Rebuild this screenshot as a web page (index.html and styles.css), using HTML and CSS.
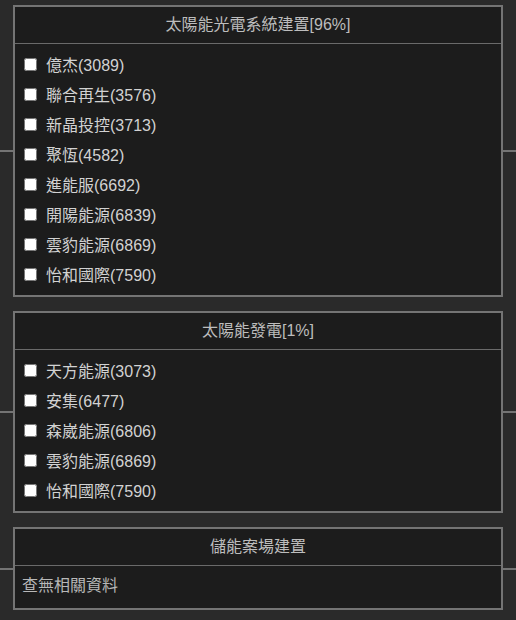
FILE: index.html
```html
<!DOCTYPE html>
<html lang="zh-Hant">
<head>
<meta charset="utf-8">
<title>產業鏈</title>
<link rel="stylesheet" href="styles.css">
</head>
<body>
<div class="chain">
  <section class="box">
    <div class="box-head">太陽能光電系統建置[96%]</div>
    <ul class="box-list">
      <li><label class="item"><input type="checkbox" class="check">億杰(3089)</label></li>
      <li><label class="item"><input type="checkbox" class="check">聯合再生(3576)</label></li>
      <li><label class="item"><input type="checkbox" class="check">新晶投控(3713)</label></li>
      <li><label class="item"><input type="checkbox" class="check">聚恆(4582)</label></li>
      <li><label class="item"><input type="checkbox" class="check">進能服(6692)</label></li>
      <li><label class="item"><input type="checkbox" class="check">開陽能源(6839)</label></li>
      <li><label class="item"><input type="checkbox" class="check">雲豹能源(6869)</label></li>
      <li><label class="item"><input type="checkbox" class="check">怡和國際(7590)</label></li>
    </ul>
  </section>
  <section class="box">
    <div class="box-head">太陽能發電[1%]</div>
    <ul class="box-list">
      <li><label class="item"><input type="checkbox" class="check">天方能源(3073)</label></li>
      <li><label class="item"><input type="checkbox" class="check">安集(6477)</label></li>
      <li><label class="item"><input type="checkbox" class="check">森崴能源(6806)</label></li>
      <li><label class="item"><input type="checkbox" class="check">雲豹能源(6869)</label></li>
      <li><label class="item"><input type="checkbox" class="check">怡和國際(7590)</label></li>
    </ul>
  </section>
  <section class="box">
    <div class="box-head">儲能案場建置</div>
    <div class="box-empty">查無相關資料</div>
  </section>
</div>
</body>
</html>
```
FILE: styles.css
```css
html, body {
  margin: 0;
  padding: 0;
  background: #2a2a2a;
}
body {
  font-family: "Liberation Sans", "Noto Sans CJK TC", sans-serif;
  font-size: 16px;
  color: #cfcfcf;
}
.chain {
  display: flex;
  flex-direction: column;
  gap: 14px;
  padding: 5px 13px;
}
.box {
  position: relative;
  border: 2px solid #747474;
  background: #1c1c1c;
}
.box::before,
.box::after {
  content: "";
  position: absolute;
  top: 50%;
  width: 13px;
  height: 2px;
  margin-top: -1px;
  background: #747474;
}
.box::before { left: -15px; }
.box::after { right: -15px; width: 14px; right: -16px; }
.box-head {
  height: 36px;
  line-height: 36px;
  text-align: center;
  color: #bdbdbd;
  border-bottom: 1px solid #6a6a6a;
}
.box-list {
  list-style: none;
  margin: 0;
  padding: 5px 0 6px;
}
.item {
  display: flex;
  align-items: center;
  height: 30px;
  padding-left: 9px;
  color: #d2d2d2;
}
.check {
  width: 13px;
  height: 13px;
  margin: 0 9px 0 0;
}
.box-empty {
  height: 42px;
  line-height: 40px;
  padding-left: 7px;
  color: #b8b8b8;
}
```
